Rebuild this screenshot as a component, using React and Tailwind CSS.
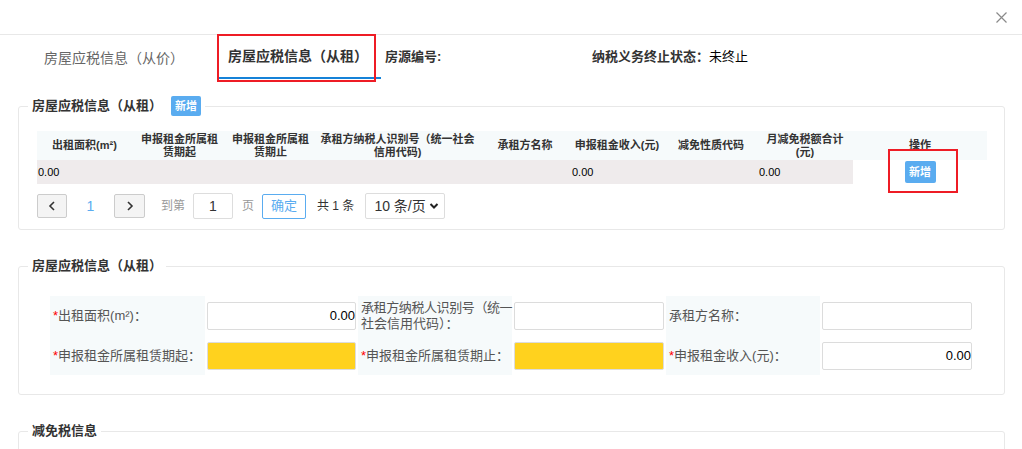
import React from "react";

const cols = [95, 95, 87, 167, 88, 96, 92, 96, 134];

function Legend({ children }) {
  return (
    <legend className="ml-[9px] px-[4px] flex items-center gap-[9px] text-[13px] font-bold text-[#333]">
      {children}
    </legend>
  );
}

function Label({ req, children }) {
  return (
    <div className="bg-[#f6fafb] flex items-center pl-[3px] text-[13px] leading-[16px] text-[#555] whitespace-nowrap">
      {req && <span className="text-[#f00]">*</span>}
      <span>{children}</span>
    </div>
  );
}

function Field({ value, yellow }) {
  return (
    <div className="flex items-center px-[2px]">
      <div
        className={
          "w-full h-[28px] border border-[#dcdcdc] rounded-[2px] flex items-center justify-end text-[13px] text-black " +
          (yellow ? "bg-[#ffd21e]" : "bg-white")
        }
      >
        {value}
      </div>
    </div>
  );
}

export default function App() {
  return (
    <div className="w-[1022px] h-[449px] overflow-hidden bg-white font-['Liberation_Sans','Noto_Sans_CJK_SC',sans-serif] text-[#333]">
      {/* top bar */}
      <div className="h-[35px] border-b border-[#e8e8e8] flex justify-end items-start pt-[11px] pr-[15px]">
        <svg width="11" height="11" viewBox="0 0 11 11" className="mt-[1px]">
          <path d="M0.5 0.5L10.5 10.5M10.5 0.5L0.5 10.5" stroke="#8a8a8a" strokeWidth="1.2" />
        </svg>
      </div>

      {/* tabs */}
      <div className="h-[47px] flex items-stretch text-[14px]">
        <div className="ml-[44px] w-[173px] flex items-center text-[#666]">房屋应税信息（从价）</div>
        <div className="relative w-[164px] flex items-center pl-[11px] font-bold text-[#333] border-b-2 border-[#1582d8] mb-[3px]">
          房屋应税信息（从租）
          <div className="absolute left-0 -top-[1px] w-[159px] h-[48px] border-2 border-[#ee1c25]"></div>
        </div>
        <div className="ml-[4px] w-[207px] flex items-center font-bold text-[13px] pb-[3px]">房源编号:</div>
        <div className="flex items-center font-bold text-[13px] pb-[3px]">
          纳税义务终止状态：<span className="font-normal text-black">未终止</span>
        </div>
      </div>

      {/* section 1 */}
      <fieldset className="mt-[14px] mx-[18px] w-[987px] border border-[#e8e8e8] rounded-[3px]">
        <Legend>
          <span>房屋应税信息（从租）</span>
          <span className="w-[30px] h-[20px] rounded-[2px] bg-[#5aacf0] text-white text-[11px] font-bold flex items-center justify-center">
            新增
          </span>
        </Legend>
        <div className="pl-[18px] pr-[17px] pt-[15px] pb-[10px]">
          <div className="relative">
            <table className="table-fixed w-[950px] border-collapse text-[11px]">
              <colgroup>
                {cols.map((w, i) => (
                  <col key={i} style={{ width: w }} />
                ))}
              </colgroup>
              <thead>
                <tr className="bg-[#f6fafb] h-[29px] text-center font-bold leading-[13px] text-[#333]">
                  <th>出租面积(m²)</th>
                  <th>申报租金所属租<br />赁期起</th>
                  <th>申报租金所属租<br />赁期止</th>
                  <th>承租方纳税人识别号（统一社会<br />信用代码)</th>
                  <th>承租方名称</th>
                  <th>申报租金收入(元)</th>
                  <th>减免性质代码</th>
                  <th>月减免税额合计<br />(元)</th>
                  <th>操作</th>
                </tr>
              </thead>
              <tbody>
                <tr className="h-[24px] text-black">
                  <td className="bg-[#efebec] pl-[1px]">0.00</td>
                  <td className="bg-[#efebec]"></td>
                  <td className="bg-[#efebec]"></td>
                  <td className="bg-[#efebec]"></td>
                  <td className="bg-[#efebec]"></td>
                  <td className="bg-[#efebec] pl-[3px]">0.00</td>
                  <td className="bg-[#efebec]"></td>
                  <td className="bg-[#efebec] pl-[2px]">0.00</td>
                  <td>
                    <div className="flex justify-center">
                      <span className="w-[31px] h-[22px] rounded-[2px] bg-[#5aacf0] text-white text-[11px] font-bold flex items-center justify-center">
                        新增
                      </span>
                    </div>
                  </td>
                </tr>
              </tbody>
            </table>
            <div className="absolute left-[851px] top-[18px] w-[70px] h-[44px] border-2 border-[#ee1c25]"></div>
          </div>

          {/* pagination */}
          <div className="mt-[9px] flex items-center text-[12px]">
            <span className="w-[30px] h-[24px] border border-[#ccc] bg-[#f4f4f4] rounded-[2px] flex items-center justify-center">
              <svg width="8" height="10" viewBox="0 0 8 10"><path d="M6 1L2 5L6 9" fill="none" stroke="#333" strokeWidth="1.6" /></svg>
            </span>
            <span className="w-[47px] text-center text-[14px] text-[#5aacf0]">1</span>
            <span className="w-[31px] h-[24px] border border-[#ccc] bg-[#f4f4f4] rounded-[2px] flex items-center justify-center">
              <svg width="8" height="10" viewBox="0 0 8 10"><path d="M2 1L6 5L2 9" fill="none" stroke="#333" strokeWidth="1.6" /></svg>
            </span>
            <span className="ml-[16px] text-[#999]">到第</span>
            <span className="ml-[8px] w-[40px] h-[26px] border border-[#ddd] rounded-[2px] flex items-center justify-center text-[14px] text-[#333]">1</span>
            <span className="ml-[9px] text-[#999]">页</span>
            <span className="ml-[8px] w-[44px] h-[25px] border border-[#5aacf0] rounded-[2px] flex items-center justify-center text-[13px] text-[#5aacf0]">确定</span>
            <span className="ml-[11px] text-[#333]">共 1 条</span>
            <span className="ml-[11px] w-[80px] h-[26px] border border-[#ddd] rounded-[2px] flex items-center justify-between pl-[8px] pr-[5px] text-[14px] text-[#333]">
              10 条/页
              <svg width="10" height="8" viewBox="0 0 10 8"><path d="M1.5 2L5 5.5L8.5 2" fill="none" stroke="#222" strokeWidth="2" /></svg>
            </span>
          </div>
        </div>
      </fieldset>

      {/* section 2 */}
      <fieldset className="mt-[28px] mx-[18px] w-[987px] border border-[#e8e8e8] rounded-[3px]">
        <Legend>
          <span className="leading-[16px]">房屋应税信息（从租）</span>
        </Legend>
        <div className="pl-[31px] pt-[22px] pb-[19px]">
          <div className="grid grid-cols-[155px_153px_154px_154px_154px_154px] grid-rows-[40px_39px]">
            <Label req>出租面积(m²)：</Label>
            <Field value="0.00" />
            <Label>
              <span className="tracking-[-0.4px]">承租方纳税人识别号（统一</span>
              <br />社会信用代码）：
            </Label>
            <Field />
            <Label>承租方名称：</Label>
            <Field />
            <Label req>申报租金所属租赁期起：</Label>
            <Field yellow />
            <Label req>申报租金所属租赁期止：</Label>
            <Field yellow />
            <Label req>申报租金收入(元)：</Label>
            <Field value="0.00" />
          </div>
        </div>
      </fieldset>

      {/* section 3 */}
      <fieldset className="mt-[28px] mx-[18px] w-[987px] h-[60px] border border-[#e8e8e8] rounded-[3px]">
        <Legend>
          <span className="leading-[16px]">减免税信息</span>
        </Legend>
      </fieldset>
    </div>
  );
}
